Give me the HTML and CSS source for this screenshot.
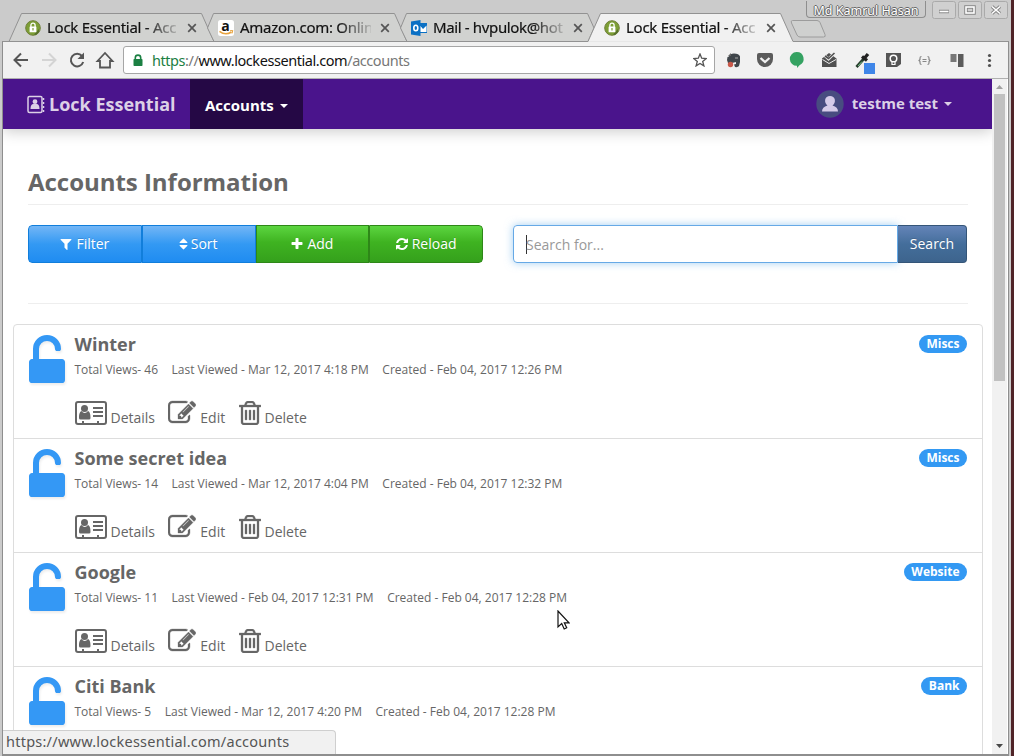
FILE: index.html
```html
<!DOCTYPE html>
<html lang="en">
<head>
<meta charset="utf-8">
<title>Lock Essential - Accounts</title>
<link rel="stylesheet" href="styles.css">
<script src="app.js" defer></script>
</head>
<body>
<svg class="defs" width="0" height="0">
  <symbol id="unlock" viewBox="320 0 1152 1536"><path d="M1376 768q40 0 68 28t28 68v576q0 40-28 68t-68 28h-960q-40 0-68-28t-28-68v-576q0-40 28-68t68-28h32v-320q0-185 131.500-316.500t316.500-131.500 316.500 131.500 131.500 316.500q0 26-19 45t-45 19h-64q-26 0-45-19t-19-45q0-106-75-181t-181-75-181 75-75 181v320h736z"/></symbol>
  <symbol id="edit" viewBox="0 0 1792 1792"><path d="M888 1184l116-116-152-152-116 116v56h96v96h56zm440-720q-16-16-33 1l-350 350q-17 17-1 33t33-1l350-350q17-17 1-33zm80 594v190q0 119-84.500 203.500t-203.500 84.500h-832q-119 0-203.500-84.500t-84.500-203.500v-832q0-119 84.500-203.500t203.500-84.500h832q63 0 117 25 15 7 18 23 3 17-9 29l-49 49q-14 14-32 8-23-6-45-6h-832q-66 0-113 47t-47 113v832q0 66 47 113t113 47h832q66 0 113-47t47-113v-126q0-13 9-22l64-64q15-15 35-7t20 29zm-96-738l288 288-672 672h-288v-288zm444 132l-92 92-288-288 92-92q28-28 68-28t68 28l152 152q28 28 28 68t-28 68z"/></symbol>
  <symbol id="trash" viewBox="192 128 1408 1536"><path d="M704 736v576q0 14-9 23t-23 9h-64q-14 0-23-9t-9-23v-576q0-14 9-23t23-9h64q14 0 23 9t9 23zm256 0v576q0 14-9 23t-23 9h-64q-14 0-23-9t-9-23v-576q0-14 9-23t23-9h64q14 0 23 9t9 23zm256 0v576q0 14-9 23t-23 9h-64q-14 0-23-9t-9-23v-576q0-14 9-23t23-9h64q14 0 23 9t9 23zm128 724v-948h-896v948q0 22 7 40.500t14.500 27 10.500 8.500h832q3 0 10.500-8.500t14.500-27 7-40.500zm-672-1076h448l-48-117q-7-9-17-11h-317q-10 2-17 11zm928 32v64q0 14-9 23t-23 9h-96v948q0 83-47 143.500t-113 60.500h-832q-66 0-113-58.500t-47-141.500v-952h-96q-14 0-23-9t-9-23v-64q0-14 9-23t23-9h309l70-167q15-37 54-63t79-26h320q40 0 79 26t54 63l70 167h309q14 0 23 9t9 23z"/></symbol>
  <symbol id="card" viewBox="0 0 32 24"><path fill="none" stroke="currentColor" stroke-width="2" d="M3 1H29a2 2 0 0 1 2 2V21a2 2 0 0 1-2 2H3a2 2 0 0 1-2-2V3a2 2 0 0 1 2-2ZM18 7H28M18 11H28M18 15H28M8 22.500V20M23 22.500V20"/><circle cx="9.500" cy="7.500" r="3.500"/><path d="M6.500 10C4 11 4 15 4 17q0 1.500 1.500 1.500h8.500q1.500 0 1.500-1.500c0-2 0-6-2.500-7-2 2.500-4.500 2.500-6.500 0Z"/></symbol>
  <symbol id="filter" viewBox="0 0 1792 1792"><path d="M1595 295q17 41-14 70l-493 493v742q0 42-39 59-13 5-25 5-27 0-45-19l-256-256q-19-19-19-45v-486l-493-493q-31-29-14-70 17-39 59-39h1280q42 0 59 39z"/></symbol>
  <symbol id="sort" viewBox="320 0 1152 1792"><path d="M1408 1088q0 26-19 45l-448 448q-19 19-45 19t-45-19l-448-448q-19-19-19-45t19-45 45-19h896q26 0 45 19t19 45zm0-384q0 26-19 45t-45 19h-896q-26 0-45-19t-19-45 19-45l448-448q19-19 45-19t45 19l448 448q19 19 19 45z"/></symbol>
  <symbol id="plus" viewBox="0 0 1792 1792"><path d="M1600 736v192q0 40-28 68t-68 28h-416v416q0 40-28 68t-68 28h-192q-40 0-68-28t-28-68v-416h-416q-40 0-68-28t-28-68v-192q0-40 28-68t68-28h416v-416q0-40 28-68t68-28h192q40 0 68 28t28 68v416h416q40 0 68 28t28 68z"/></symbol>
  <symbol id="refresh" viewBox="0 0 1792 1792"><path d="M1639 1056q0 5-1 7-64 268-268 434.500t-478 166.500q-146 0-282.500-55t-243.500-157l-129 129q-19 19-45 19t-45-19-19-45v-448q0-26 19-45t45-19h448q26 0 45 19t19 45-19 45l-137 137q71 66 161 102t187 36q134 0 250-65t186-179q11-17 53-117 8-23 30-23h192q13 0 22.500 9.500t9.500 22.500zm25-800v448q0 26-19 45t-45 19h-448q-26 0-45-19t-19-45 19-45l138-138q-148-137-349-137-134 0-250 65t-186 179q-11 17-53 117-8 23-30 23h-199q-13 0-22.500-9.500t-9.500-22.500v-7q65-268 270-434.500t480-166.500q146 0 284 55.500t245 156.500l130-129q19-19 45-19t45 19 19 45z"/></symbol>
  <symbol id="site" viewBox="0 0 16 16"><circle cx="8" cy="8" r="7.300" fill="#7c9e35" stroke="#6f7f3a" stroke-width="1"/><path d="M9 14.500 14 9v3l-3 3z" fill="#557029"/><path d="M5.900 7V5.200a2.100 2.100 0 0 1 4.200 0V7" fill="none" stroke="#fff" stroke-width="1.300"/><rect x="4.600" y="6.500" width="6.800" height="5.700" rx=".5" fill="#fff"/><path d="M8 8v2.500" stroke="#7c9e35" stroke-width="1.200"/></symbol>
  <symbol id="close" viewBox="0 0 10 10"><path d="m1.200 1.200 7.600 7.600m0-7.600-7.600 7.600" stroke="#555" stroke-width="1.700"/></symbol>
</svg>
<div class="window">
  <header class="tabstrip">
    <svg class="tab-shapes" width="1011" height="42" viewBox="0 0 1011 42">
      <g stroke="#929292" fill="#d1d2d0">
        <path d="M9 41.500 21.500 13.500H201.500L214 41.500Z"/>
        <path d="M207.500 28 213.500 13.500H394.500L407 41.500H214Z"/>
        <path d="M400.500 28 406.500 13.500H587.500L594 28 588 41.500H407Z"/>
        <path fill="#cfd0cf" stroke="#9c9c9c" d="M792.500 20.500H817q2 0 3 2l5 12q1 2.500-1.500 2.500H800q-2 0-3-2l-5.500-12q-1-2.500 1-2.500Z"/>
        <path d="M2 41.500H588L600.500 13.500H780.500L793 41.500H1009" fill="#f1f1f1"/>
      </g>
      <path d="M588.500 42H792.500" stroke="#f1f1f1"/>
    </svg>
    <div class="tab"><svg class="fav"><use href="#site"/></svg><span>Lock Essential - Acc</span><svg class="x"><use href="#close"/></svg></div>
    <div class="tab"><svg class="fav" viewBox="0 0 16 16"><rect width="16" height="16" rx="2.500" fill="#fff"/><text x="7.600" y="10.500" text-anchor="middle" class="amz">a</text><path d="M1.500 11.300c4 3.200 8 3.200 12 .7" fill="none" stroke="#e8a33d" stroke-width="1.500"/><path d="m12 10.700 2.800-.2-.8 3" fill="none" stroke="#e8a33d"/></svg><span>Amazon.com: Onlin</span><svg class="x"><use href="#close"/></svg></div>
    <div class="tab"><svg class="fav" viewBox="0 0 16 16"><path d="M9 3h7v10H9z" fill="#0a70c4"/><path d="M9 5.500 12 9l3.500-3.500V12H9z" fill="#fff"/><path d="m9 5 3 3 3.500-4.500" fill="none" stroke="#0a70c4"/><path d="M0 1.500 9.500 0v16L0 14.500z" fill="#0a70c4"/><ellipse cx="4.800" cy="8" rx="2" ry="2.800" fill="none" stroke="#fff" stroke-width="1.600"/></svg><span class="mail">Mail - hvpulok@hot</span><svg class="x"><use href="#close"/></svg></div>
    <div class="tab"><svg class="fav"><use href="#site"/></svg><span>Lock Essential - Acc</span><svg class="x"><use href="#close"/></svg></div>
    <div class="wincontrols">
      <div class="profile">Md Kamrul Hasan</div>
      <svg width="77" height="19" viewBox="0 0 77 19"><g fill="#d0d0d0" stroke="#aaa"><rect x=".5" y=".5" width="23" height="17" rx="2"/><rect x="26.500" y=".5" width="23" height="17" rx="2"/><rect x="52.500" y=".5" width="23" height="17" rx="2"/></g><g fill="none" stroke="#858585" stroke-width="3.500"><path d="M7 10.500H17"/><rect x="34" y="6" width="8" height="6"/><path d="m60 5.500 8 7m0-7-8 7"/></g><g fill="none" stroke="#fff" stroke-width="1.600"><path d="M7.500 10.500H16.500"/><rect x="34" y="6" width="8" height="6"/><path d="m60 5.500 8 7m0-7-8 7"/></g></svg>
    </div>
  </header>
  <div class="frame">
    <div class="toolbar">
      <svg class="navicons" width="120" height="36" viewBox="3 42 120 36" fill="none" stroke="#565656" stroke-width="2"><path d="M28 60H15M21 53.500 14.500 60 21 66.500"/><path d="M42 60H55M49 53.500 55.500 60 49 66.500" stroke="#d4d4d4"/><path d="M82 56a6.300 6.300 0 1 0 1.200 6"/><path d="M84 52.500v6.500h-6.500z" fill="#565656" stroke="none"/><path d="M97.500 61 105 53l7.500 8H110v6.500H100V61Z" stroke-width="1.800"/></svg>
      <div class="omnibox">
        <svg width="10" height="13" viewBox="0 0 10 13"><path d="M2.300 6V3.800a2.700 2.700 0 0 1 5.400 0V6" fill="none" stroke="#1b8043" stroke-width="1.600"/><rect x=".5" y="5" width="9" height="7" rx=".8" fill="#1b8043"/></svg>
        <div class="url"><i>https</i><s>://</s>www.lockessential.com<s>/accounts</s></div>
        <svg width="14" height="14" viewBox="0 0 14 14"><path d="m7 1 1.700 4.200 4.500.3-3.500 2.900 1.200 4.500L7 10.500l-3.900 2.400 1.200-4.500L.8 5.500l4.500-.3z" fill="none" stroke="#555" stroke-width="1.300"/></svg>
      </div>
      <svg class="extensions" width="290" height="36" viewBox="717 42 290 36">
        <path d="M729 56.500q1-3 5-3 5 0 6 3 .5 6-1 9.500-1 1.500-4 1l-1-2.500 2-.5v-2l-4 1h-4l-1-3 .5-3z" fill="#40464b"/><path d="m731 53-3 3h3z" fill="#666"/><circle cx="730.500" cy="64.500" r="2.700" fill="#c9594a"/><path d="M735 58h3" stroke="#aaa"/>
        <path d="M759 53h12q2 0 2 2v4a8 8 0 0 1-16 0v-4q0-2 2-2Z" fill="#5b5b5b"/><path d="m760.500 58 4.500 4 4.500-4" fill="none" stroke="#f1f1f1" stroke-width="2.300"/>
        <path d="M796.500 52a6.900 6.900 0 0 1 3 13.200L797 68v-2.200a6.900 6.900 0 0 1-.5-13.800Z" fill="#35a262"/>
        <path d="M822 58.500 829 53l7.500 5.500V67H822z" fill="#505050"/><path d="m822.500 59.500 6.500 4 7-4" fill="none" stroke="#eee"/><path d="m824.500 55.500 4 3.500 6-6" fill="none" stroke="#eee" stroke-width="2.800"/><path d="m825 56 3.500 2.500 6-5.500" fill="none" stroke="#505050" stroke-width="1.600"/>
        <path d="m856.500 67 8-9" stroke="#253b2b" stroke-width="2.800"/><path d="m858 66 4-4.500" stroke="#7ac58a"/><path d="m862 56.500 5 4m-2-3 3-3.500" stroke="#222" stroke-width="3.300"/><path d="M864 63h11v11h-11z" fill="#3f86e8"/>
        <path d="M886 53h15v11l-4 3h-11z" fill="#555"/><circle cx="893.500" cy="58.500" r="3.300" fill="#555" stroke="#fff" stroke-width="1.500"/><path d="M892 62v2.500h3V62" fill="none" stroke="#fff" stroke-width="1.200"/>
        <g fill="none" stroke="#888" stroke-width="1.200"><path d="M921.500 56.500q-1.500 0-1.500 1.500v1.500l-1 1 1 1V63q0 1.500 1.500 1.500M927.500 56.500q1.500 0 1.500 1.500v1.500l1 1-1 1V63q0 1.500-1.500 1.500M922.500 59.500h4M922.500 61.500h4"/></g>
        <path d="M950.500 54h6v8h-6z" fill="#777"/><path d="M958 54h5.500v13H958z" fill="#5b5b5b"/>
        <g fill="#505050"><circle cx="989.500" cy="55.500" r="1.600"/><circle cx="989.500" cy="60.500" r="1.600"/><circle cx="989.500" cy="65.500" r="1.600"/></g>
      </svg>
    </div>
    <div class="viewport">
      <main class="page">
        <nav class="navbar">
          <a class="brand"><svg width="18" height="19" viewBox="0 0 18 19"><rect x="1" y="1.500" width="14" height="16" rx="1.500" fill="none" stroke="#dcd0e6" stroke-width="1.500"/><circle cx="8" cy="6.700" r="2.400" fill="#dcd0e6"/><path d="M3.500 14q0-5 3-5h3q3 0 3 5z" fill="#dcd0e6"/><path d="M16.500 3v2m0 2v2m0 2v2m0 2v2" stroke="#dcd0e6" stroke-width="1.500"/></svg>Lock Essential</a>
          <a class="active">Accounts<b class="caret"></b></a>
          <a class="user"><svg width="28" height="28" viewBox="0 0 28 28"><circle cx="14" cy="14" r="13.700" fill="#484c80"/><path d="M6 21.500q0-4.500 5.500-6-3-2.500-2.300-6Q10 6 14 6t4.800 3.500q.7 3.500-2.300 6 5.500 1.500 5.500 6z" fill="#d6cbe9"/></svg><span>testme test</span><b class="caret"></b></a>
        </nav>
        <section class="content">
          <h1>Accounts Information</h1>
          <div class="actions">
            <div class="group">
              <button class="blue"><svg><use href="#filter"/></svg>Filter</button>
              <button class="blue"><svg class="sorticon"><use href="#sort"/></svg>Sort</button>
              <button class="green"><svg><use href="#plus"/></svg>Add</button>
              <button class="green"><svg><use href="#refresh"/></svg>Reload</button>
            </div>
            <div class="search"><div class="field"><span class="ph">Search for...</span></div><button>Search</button></div>
          </div>
        </section>
        <div class="list" id="list"></div>
        <div class="status">https://www.lockessential.com/accounts</div>
        <svg class="cursor" width="13" height="20" viewBox="0 0 13 20"><path d="M1 1v16l3.700-3.400L7.200 19l2.500-1.200-2.400-5H12z" fill="#fff" stroke="#111" stroke-width="1.200"/></svg>
      </main>
      <div class="scrollbar"><svg width="15" height="15" viewBox="0 0 15 15"><path d="M4 10 7.500 6 11 10z" fill="#a0a0a0"/></svg><div class="thumb"></div><svg width="15" height="15" viewBox="0 0 15 15"><path d="M4 5h7L7.500 9z" fill="#484848"/></svg></div>
    </div>
  </div>
</div>
</body>
</html>
```
FILE: styles.css
```css
* { box-sizing: border-box; }
body { margin: 0; width: 1014px; height: 756px; overflow: hidden; background: #502428; font-family: "Open Sans", sans-serif; color: #666; }
.defs { position: absolute; }
svg { display: block; flex: none; }
.window { width: 1011px; height: 756px; background: #cbcbcb; display: flex; flex-direction: column; }
.tabstrip { height: 42px; position: relative; display: flex; padding-left: 25px; flex: none; }
.tab-shapes { position: absolute; left: 0; top: 0; }
.tab { position: relative; width: 193px; height: 29px; margin-top: 13px; display: flex; align-items: center; color: #111; font: 15px "Noto Sans", sans-serif; }
.tab .fav { width: 16px; height: 16px; margin-right: 6px; }
.tab span { width: 131px; white-space: nowrap; letter-spacing: -.28px; line-height: 22px; -webkit-text-stroke: .2px #111; padding-bottom: 1px; -webkit-mask-image: linear-gradient(to right, #000 98px, transparent 137px); mask-image: linear-gradient(to right, #000 98px, transparent 137px); }
.tab .mail { letter-spacing: -.36px; }
.tab .x { width: 10px; height: 10px; margin-left: 9px; }
.amz { font: bold 14px "Open Sans", sans-serif; fill: #111; }
.wincontrols { position: relative; display: flex; margin-left: 9px; padding-top: 1px; gap: 6px; }
.profile { height: 17px; width: 120px; border: 1px solid #8e8e8e; border-top: 0; border-radius: 0 0 4px 4px; text-align: center; color: #fff; font: 12.5px/19px "Noto Sans", sans-serif; text-shadow: 1px 0 #666, -1px 0 #666, 0 1px #666, 0 -1px #666; white-space: nowrap; }
.frame { flex: 1; min-height: 0; margin: 0 2px 0 2px; border: solid #8e8e8e; border-width: 0 1px 2px; background: #fff; width: 1007px; }
.toolbar { height: 37px; background: #f1f1f1; border-bottom: 1px solid #b0b0b0; display: flex; align-items: center; }
.omnibox { width: 592px; height: 28px; background: #fff; border: 1px solid #a6a6a6; border-radius: 3px; display: flex; align-items: center; padding: 0 7px 0 9px; margin-right: 2px; }
.url { flex: 1; margin-left: 9px; padding-bottom: 1px; font: 14.5px "Noto Sans", sans-serif; color: #111; letter-spacing: -.44px; }
.url i { font-style: normal; color: #1b8043; }
.url s { text-decoration: none; color: #777; }
.viewport { height: 675px; display: flex; }
.page { width: 989px; height: 675px; overflow: hidden; position: relative; flex: none; }
.navbar { height: 50px; background: #4a148c; display: flex; position: relative; box-shadow: 0 2px 14px rgba(0,0,0,.22); font-weight: bold; }
.brand { width: 187px; padding-left: 24px; display: flex; align-items: center; gap: 4px; font-size: 18px; color: #dcd0e6; white-space: nowrap; }
.active { width: 113px; background: #250845; color: #fff; display: flex; align-items: center; padding: 1px 0 0 15px; font-size: 15px; }
.caret { border: 4px solid transparent; border-top-color: currentColor; border-bottom: 0; margin-left: 6.5px; margin-top: 2px; }
.user { margin-left: auto; margin-right: 40px; display: flex; align-items: center; color: #dcd0e6; font-size: 15px; }
.user span { margin-left: 8px; padding-bottom: 3px; }
.user .caret { margin-left: 6px; margin-top: 0; }
.content { padding: 0 24px 0 25px; }
h1 { margin: 32px 0 20px; height: 44px; border-bottom: 1px solid #eee; font-size: 24px; line-height: 41px; letter-spacing: -.03px; }
.actions { display: flex; justify-content: space-between; height: 79px; border-bottom: 1px solid #eee; padding-right: 1px; }
.group { width: 455px; height: 38px; display: flex; border-radius: 4px; overflow: hidden; }
button { font: 14px "Open Sans", sans-serif; color: #fff; height: 38px; padding: 0 0 1px; display: flex; align-items: center; justify-content: center; text-shadow: 0 -1px rgba(0,0,0,.15); }
.group button { flex: 1; gap: 3px; padding-right: 1px; }
.group svg { width: 14px; height: 14px; fill: #fff; }
.group .sorticon { width: 9px; }
.blue { background: linear-gradient(#73b6f6, #3399f3 50%, #1f8cf1); border: 1px solid #117edb; }
.green { background: linear-gradient(#5cd540, #3fb321 45%, #35a01c); border: 1px solid #2e8718; }
.blue:first-child { border-radius: 4px 0 0 4px; }
.green:last-child { border-radius: 0 4px 4px 0; }
.search { width: 454px; display: flex; height: 38px; }
.field { flex: 1; border: 1px solid #66a9e6; border-radius: 4px 0 0 4px; box-shadow: 0 0 8px rgba(102,175,233,.6); display: flex; align-items: center; padding-left: 12px; }
.ph { border-left: 1px solid #333; color: #999; font-size: 14px; line-height: 19px; text-indent: -1px; }
.search button { width: 69px; border: 1px solid #345578; border-left: 0; border-radius: 0 4px 4px 0; background: linear-gradient(#6484b8, #446e9b 50%, #3d648d); position: relative; }
.list { margin: 20px 9px 0 10px; border: 1px solid #ddd; border-radius: 4px; height: 500px; }
.item { height: 114px; border-bottom: 1px solid #ddd; padding: 10px 15px 0 14.5px; display: flex; }
.lock { width: 36px; height: 48px; fill: #3498f5; filter: drop-shadow(1px 2px 1px rgba(0,0,0,.07)); }
.body { margin-left: 10px; flex: 1; }
.title { font-size: 18px; font-weight: bold; line-height: 18px; height: 20px; }
.meta { display: flex; gap: 13.5px; font-size: 12px; line-height: 20px; margin-top: 5px; white-space: nowrap; }
.links { display: flex; align-items: flex-start; margin-top: 21px; font-size: 14px; line-height: 19px; fill: #666; }
.links span { margin: 7px 13.300px 0 4px; }
.links .card { width: 32px; height: 24px; }
.links .edit { width: 28px; height: 28px; margin-top: -2px; stroke: #666; stroke-width: 20px; }
.links .trash { width: 22px; height: 24px; stroke: #666; stroke-width: 20px; }
.badge { height: 18px; border-radius: 9px; padding: 0 7.5px; background: #3399f3; color: #fff; font-size: 12px; line-height: 17px; font-weight: bold; }
.status { position: absolute; left: 0; bottom: 0; width: 333px; height: 24px; background: #f1f1f1; border: solid #cfcfcf; border-width: 1px 1px 0 0; border-radius: 0 4px 0 0; font: 14.5px/21px "Noto Sans", sans-serif; color: #555; padding-left: 3px; letter-spacing: .24px; }
.cursor { position: absolute; left: 554px; top: 531px; }
.scrollbar { width: 15px; background: #f1f1f1; display: flex; flex-direction: column; }
.thumb { width: 11px; height: 287px; background: #c1c1c1; margin: 0 2px auto; }
```
FILE: app.js
```js
const accounts = [
  ["Winter", "46", "Mar 12, 2017 4:18 PM", "Feb 04, 2017 12:26 PM", "Miscs"],
  ["Some secret idea", "14", "Mar 12, 2017 4:04 PM", "Feb 04, 2017 12:32 PM", "Miscs"],
  ["Google", "11", "Feb 04, 2017 12:31 PM", "Feb 04, 2017 12:28 PM", "Website"],
  ["Citi Bank", "5", "Mar 12, 2017 4:20 PM", "Feb 04, 2017 12:28 PM", "Bank"]
];
document.getElementById("list").innerHTML = accounts.map(([name, views, viewed, created, tag]) => `
  <div class="item">
    <svg class="lock"><use href="#unlock"/></svg>
    <div class="body">
      <div class="title">${name}</div>
      <div class="meta"><span>Total Views- ${views}</span><span>Last Viewed - ${viewed}</span><span>Created - ${created}</span></div>
      <div class="links"><svg class="card"><use href="#card"/></svg><span>Details</span><svg class="edit"><use href="#edit"/></svg><span>Edit</span><svg class="trash"><use href="#trash"/></svg><span>Delete</span></div>
    </div>
    <div class="badge">${tag}</div>
  </div>`).join("");
```
